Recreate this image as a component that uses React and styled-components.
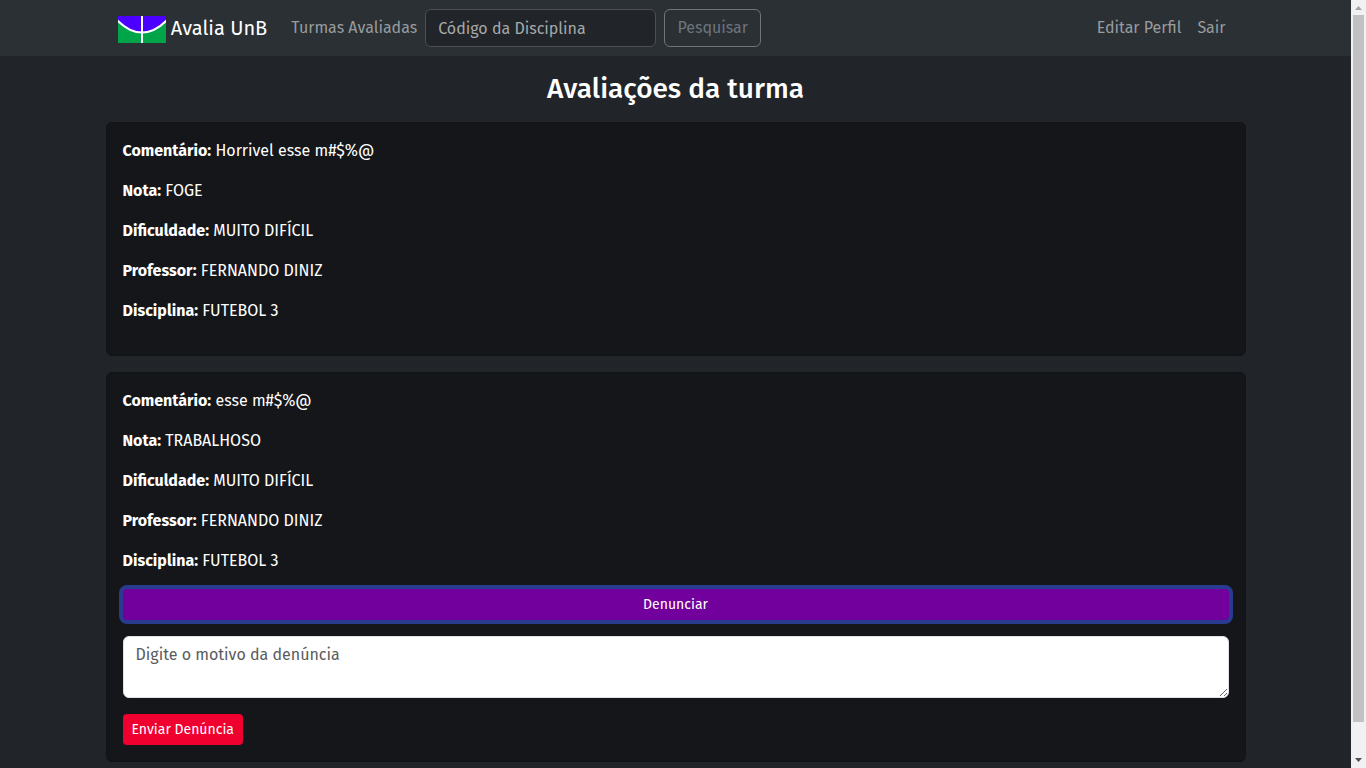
import React from "react";
import styled, { createGlobalStyle } from "styled-components";

const GlobalStyle = createGlobalStyle`
  *, *::before, *::after { box-sizing: border-box; }
  body {
    margin: 0;
    background: #212529;
    color: #fff;
    font-family: "Fira Sans", "Noto Sans", sans-serif;
    font-size: 16px;
    line-height: 24px;
  }
  button, input, textarea { font: inherit; }
`;

const Window = styled.div`
  display: grid;
  grid-template-columns: minmax(0, 1fr) 15px;
  height: 100vh;
  overflow: hidden;
`;

const Page = styled.div`
  min-width: 0;
`;

const Navbar = styled.nav`
  background: #2b3035;
  padding: 8px 0;
`;

const NavContent = styled.div`
  display: flex;
  align-items: center;
  max-width: 1140px;
  height: 40px;
  margin: 0 auto;
  padding: 0 12px;
`;

const Brand = styled.a`
  margin-right: 16px;
  color: #fff;
  font-size: 20px;
  line-height: 30px;
  text-decoration: none;
  white-space: nowrap;
`;

const Logo = styled.svg`
  width: 48px;
  height: 27px;
  vertical-align: text-top;
`;

const NavLink = styled.a`
  padding: 8px;
  color: #999c9e;
  text-decoration: none;
  white-space: nowrap;
`;

const Search = styled.form`
  display: flex;
  gap: 8px;
  margin-right: auto;
`;

const SearchInput = styled.input`
  width: 231px;
  height: 38px;
  padding: 6px 12px;
  color: #fff;
  line-height: normal;
  background: #212529;
  border: 1px solid #495057;
  border-radius: 6px;
  &::placeholder { color: #a6a8a9; opacity: 1; }
`;

const SearchButton = styled.button`
  width: 97px;
  height: 38px;
  padding: 0;
  color: #6c757d;
  background: transparent;
  border: 1px solid #6c757d;
  border-radius: 6px;
`;

const Main = styled.main`
  max-width: 1140px;
  margin: 0 auto;
  padding: 16px 0 5px;
`;

const Title = styled.h1`
  margin: 0 0 16px;
  font-size: 28px;
  line-height: 34px;
  font-weight: 500;
  text-align: center;
`;

const Card = styled.article`
  padding: 16px;
  background: #141619;
  border: 1px solid #111315;
  border-radius: 6px;
  & + & { margin-top: 16px; }
`;

const Field = styled.p`
  margin: 0 0 16px;
`;

const ReportForm = styled.form`
  display: flex;
  flex-direction: column;
  align-items: flex-start;
  gap: 16px;
`;

const SmallButton = styled.button`
  width: ${(p) => (p.$wide ? "100%" : "auto")};
  height: 31px;
  padding: 0 9px;
  color: #fff;
  background: ${(p) => (p.$wide ? "#72009c" : "#f0002f")};
  border: 0;
  border-radius: 4px;
  font-size: 14px;
  line-height: 21px;
  box-shadow: ${(p) => (p.$focused ? "0 0 0 4px #293b8f" : "none")};
`;

const Reason = styled.textarea`
  display: block;
  width: 100%;
  height: 62px;
  padding: 6px 12px;
  color: #212529;
  background: #fff;
  border: 1px solid #dee2e6;
  border-radius: 6px;
  resize: vertical;
  &::placeholder { color: #595c5f; opacity: 1; }
`;

const Scrollbar = styled.div`
  display: flex;
  flex-direction: column;
  align-items: center;
  background: #f1f1f1;
`;

const Arrow = styled.svg`
  display: block;
  width: 15px;
  height: 15px;
  flex: none;
`;

const Track = styled.div`
  display: grid;
  grid-template-rows: 23fr 1fr;
  flex: 1;
  width: 11px;
`;

const Thumb = styled.div`
  background: #c1c1c1;
`;

const reviews = [
  {
    Comentário: "Horrivel esse m#$%@",
    Nota: "FOGE",
    Dificuldade: "MUITO DIFÍCIL",
    Professor: "FERNANDO DINIZ",
    Disciplina: "FUTEBOL 3",
  },
  {
    Comentário: "esse m#$%@",
    Nota: "TRABALHOSO",
    Dificuldade: "MUITO DIFÍCIL",
    Professor: "FERNANDO DINIZ",
    Disciplina: "FUTEBOL 3",
  },
];

const stop = (e) => e.preventDefault();

function Review({ review, reporting }) {
  return (
    <Card>
      {Object.entries(review).map(([label, value]) => (
        <Field key={label}>
          <strong>{label}:</strong> {value}
        </Field>
      ))}
      {reporting && (
        <ReportForm onSubmit={stop}>
          <SmallButton type="button" $wide $focused>Denunciar</SmallButton>
          <Reason aria-label="Motivo da denúncia" placeholder="Digite o motivo da denúncia" />
          <SmallButton type="submit">Enviar Denúncia</SmallButton>
        </ReportForm>
      )}
    </Card>
  );
}

export default function App() {
  return (
    <>
      <GlobalStyle />
      <Window>
        <Page>
          <Navbar>
            <NavContent>
              <Brand href="#">
                <Logo viewBox="0 0 48 27" aria-hidden="true">
                  <rect width="48" height="27" fill="#00a54a" />
                  <path d="M0 0H48V5C41 12 33 16.500 24 16.500S7 12 0 5Z" fill="#4b00ff" />
                  <path d="M-1 4L0 5C7 12 15 16.500 24 16.500S41 12 48 5L49 4" fill="none" stroke="#fff" strokeWidth="2" />
                  <path d="M24 0V27" stroke="#fff" strokeWidth="2" />
                </Logo>{" "}
                Avalia UnB
              </Brand>
              <NavLink href="#">Turmas Avaliadas</NavLink>
              <Search onSubmit={stop}>
                <SearchInput aria-label="Código da Disciplina" placeholder="Código da Disciplina" />
                <SearchButton type="submit">Pesquisar</SearchButton>
              </Search>
              <NavLink href="#">Editar Perfil</NavLink>
              <NavLink href="#">Sair</NavLink>
            </NavContent>
          </Navbar>
          <Main>
            <Title>Avaliações da turma</Title>
            <Review review={reviews[0]} />
            <Review review={reviews[1]} reporting />
          </Main>
        </Page>
        <Scrollbar aria-hidden="true">
          <Arrow viewBox="0 0 15 15"><path d="M4 10L7.500 6L11 10Z" fill="#a3a3a3" /></Arrow>
          <Track><Thumb /></Track>
          <Arrow viewBox="0 0 15 15"><path d="M4 5L7.500 9L11 5Z" fill="#505050" /></Arrow>
        </Scrollbar>
      </Window>
    </>
  );
}
